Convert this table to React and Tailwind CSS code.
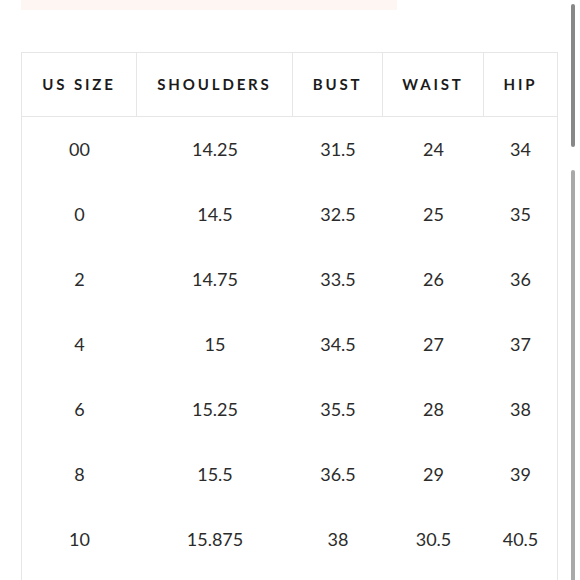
import React from "react";

const headers = ["US SIZE", "SHOULDERS", "BUST", "WAIST", "HIP"];
const rows = [
  ["00", "14.25", "31.5", "24", "34"],
  ["0", "14.5", "32.5", "25", "35"],
  ["2", "14.75", "33.5", "26", "36"],
  ["4", "15", "34.5", "27", "37"],
  ["6", "15.25", "35.5", "28", "38"],
  ["8", "15.5", "36.5", "29", "39"],
  ["10", "15.875", "38", "30.5", "40.5"],
];

export default function App() {
  return (
    <div className="relative h-[580px] w-[580px] overflow-hidden bg-white">
      <div className="ml-[21px] h-[10px] w-[376px] bg-[#fdf6f3]" />
      <div className="ml-[21px] mt-[42px] w-[537px] border-x border-t border-[#e6e6e6] pb-[30px]">
        <div className="grid grid-cols-[115px_156px_90px_101px_73px] border-b border-[#e6e6e6]">
          {headers.map((h, i) => (
            <div
              key={h}
              className={`flex h-[63px] items-center justify-center text-[15px] font-bold tracking-[0.19em] text-[#1b1b1b] ${
                i < 4 ? "border-r border-[#e6e6e6]" : ""
              }`}
              style={{ fontFamily: "Lato, 'Liberation Sans', sans-serif" }}
            >
              {h}
            </div>
          ))}
        </div>
        {rows.map((r, ri) => (
          <div key={ri} className="grid h-[65px] grid-cols-[115px_156px_90px_101px_73px]">
            {r.map((c, ci) => (
              <div
                key={ci}
                className="flex items-center justify-center text-[18px] text-[#2b2b2b]"
                style={{ fontFamily: "Lato, 'Liberation Sans', sans-serif" }}
              >
                {c}
              </div>
            ))}
          </div>
        ))}
      </div>
      <div className="absolute left-[571px] top-[4px] h-[143px] w-[4px] rounded-full bg-[#888888]" />
      <div className="absolute left-[571px] top-[170px] h-[420px] w-[4px] rounded-full bg-[#a9a9a9]" />
    </div>
  );
}
